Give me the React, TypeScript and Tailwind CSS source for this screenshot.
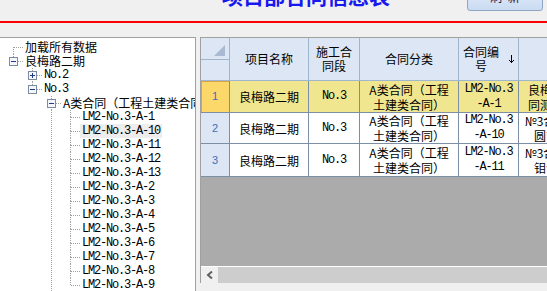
import React from "react";

type TRow = {
  level: number;
  text: string;
  kind: "leaf" | "minus" | "plus";
  first?: boolean;
  last: boolean;
  anc: number[];
  mono?: boolean;
  hl?: boolean;
};

const lm = ["1", "10", "11", "12", "13", "2", "3", "4", "5", "6", "7", "8", "9"];

const treeRows: TRow[] = [
  { level: 0, text: "加载所有数据", kind: "leaf", first: true, last: false, anc: [] },
  { level: 0, text: "良梅路二期", kind: "minus", last: true, anc: [] },
  { level: 1, text: "No.2", kind: "plus", last: false, anc: [], mono: true },
  { level: 1, text: "No.3", kind: "minus", last: true, anc: [], mono: true },
  { level: 2, text: "A类合同（工程土建类合同）", kind: "minus", last: false, anc: [] },
  ...lm.map((n, i) => ({
    level: 3,
    text: `LM2-No.3-A-${n}`,
    kind: "leaf" as const,
    last: i === lm.length - 1,
    anc: [2],
    mono: true,
    hl: n === "10",
  })),
];

const DOT = { stroke: "#a0a0a0", strokeDasharray: "1 1", strokeWidth: 1 };

function Connector({ r }: { r: TRow }) {
  const W = 23 + 19 * r.level;
  const cx = 13 + 19 * r.level;
  const c = cx + 0.5;
  const hasBox = r.kind !== "leaf";
  return (
    <svg width={W} height={14} className="shrink-0" shapeRendering="crispEdges">
      {r.anc.map((a) => (
        <line key={a} x1={13 + 19 * a + 0.5} y1={0} x2={13 + 19 * a + 0.5} y2={14} {...DOT} />
      ))}
      {!r.first && <line x1={c} y1={0} x2={c} y2={7} {...DOT} />}
      {!r.last && <line x1={c} y1={7} x2={c} y2={14} {...DOT} />}
      <line x1={hasBox ? cx + 5 : cx + 1} y1={7.5} x2={W} y2={7.5} {...DOT} />
      {hasBox && (
        <g>
          <rect x={cx - 4 + 0.5} y={3.5} width={8} height={8} fill="#f4f6fa" stroke="#7c8aa3" />
          <line x1={cx - 2} y1={7.5} x2={cx + 3} y2={7.5} stroke="#1e3c8c" />
          {r.kind === "plus" && <line x1={c} y1={5} x2={c} y2={10} stroke="#1e3c8c" />}
        </g>
      )}
    </svg>
  );
}

const CJK = "font-['Noto_Sans_CJK_SC',sans-serif]";
const MONO = "font-['Liberation_Mono',monospace] text-[12px] tracking-[-1.2px]";

type Cell = { lines: string[]; mono?: boolean };

const bodyRows: { n: string; h: string; sel?: boolean; cells: Cell[] }[] = [
  {
    n: "1",
    h: "h-[32px]",
    sel: true,
    cells: [
      { lines: ["良梅路二期"] },
      { lines: ["No.3"], mono: true },
      { lines: ["A类合同（工程", "土建类合同）"] },
      { lines: ["LM2-No.3", "-A-1"], mono: true },
      { lines: ["良梅路二期合同段", "同测试工程项目名"] },
    ],
  },
  {
    n: "2",
    h: "h-[31px]",
    cells: [
      { lines: ["良梅路二期"] },
      { lines: ["No.3"], mono: true },
      { lines: ["A类合同（工程", "土建类合同）"] },
      { lines: ["LM2-No.3", "-A-10"], mono: true },
      { lines: ["№3合同段道路工程", "圆管涵工程施工"] },
    ],
  },
  {
    n: "3",
    h: "h-[33px]",
    cells: [
      { lines: ["良梅路二期"] },
      { lines: ["No.3"], mono: true },
      { lines: ["A类合同（工程", "土建类合同）"] },
      { lines: ["LM2-No.3", "-A-11"], mono: true },
      { lines: ["№3合同段道路工程", "钼合金护栏工程"] },
    ],
  },
];

const colW = ["w-[79px]", "w-[51px]", "w-[99px]", "w-[60px]", "w-[114px]"];

export default function App() {
  return (
    <div className={`w-[547px] h-[291px] overflow-hidden bg-[#f0f0f0] ${CJK}`}>
      {/* top bar */}
      <div className="h-[21px] flex items-start overflow-hidden">
        <div className="pl-[222px] mt-[-16px] text-[21px] leading-[22px] font-bold text-[#1717f0] whitespace-nowrap">
          项目部合同信息表
        </div>
        <div className="ml-auto mr-[4px] mt-[-17px] h-[28px] w-[76px] shrink-0 rounded-[3px] border border-[#8fa6c4] bg-linear-to-b from-[#eaf1fb] to-[#c9dbf2] flex items-center justify-center text-[12px] text-[#1b2050]">
          刷&nbsp;&nbsp;新
        </div>
      </div>
      <div className="h-[2px] bg-[#ff0000]" />

      {/* main */}
      <div className="mt-[14px] flex items-start">
        {/* tree */}
        <div className="w-[196px] h-[260px] shrink-0 border-t border-r border-[#a0a0a0] bg-white overflow-hidden pt-[2px]">
          {treeRows.map((r, i) => (
            <div key={i} className="h-[14px] flex items-center whitespace-nowrap">
              <Connector r={r} />
              <span
                className={`px-[2px] leading-[14px] text-black ${r.mono ? MONO : "text-[12px]"} ${
                  r.hl ? "bg-[#ededed]" : ""
                }`}
              >
                {r.text}
              </span>
            </div>
          ))}
        </div>

        {/* grid */}
        <div className="ml-[4px] flex-1 min-w-0 h-[246px] border-l border-t border-[#a0a0a0] overflow-hidden flex flex-col">
          <div className="flex flex-col w-[450px]">
            {/* header */}
            <div className="h-[43px] flex bg-[#dce6f4] border-b border-[#9eb6ce] text-[12px] text-black leading-[14px]">
              <div className="w-[29px] shrink-0 border-r border-[#9eb6ce] flex flex-col">
                <div className="h-[22px] border-b border-[#9eb6ce] flex justify-end items-end pr-[4px] pb-[3px]">
                  <svg width="11" height="11">
                    <polygon points="11,0 11,11 0,11" fill="#a9b9d2" />
                  </svg>
                </div>
              </div>
              <div className={`${colW[0]} shrink-0 border-r border-[#9eb6ce] flex items-center justify-center`}>
                项目名称
              </div>
              <div className={`${colW[1]} shrink-0 border-r border-[#9eb6ce] flex items-center justify-center text-center`}>
                施工合
                <br />
                同段
              </div>
              <div className={`${colW[2]} shrink-0 border-r border-[#9eb6ce] flex items-center justify-center`}>
                合同分类
              </div>
              <div className={`${colW[3]} shrink-0 border-r border-[#9eb6ce] flex items-center`}>
                <div className="flex-1 text-center pr-[6px]">
                  合同编
                  <br />
                  号
                </div>
                <svg width="5" height="9" className="mr-[4px] shrink-0" shapeRendering="crispEdges">
                  <line x1="2.5" y1="0" x2="2.5" y2="8" stroke="#000" />
                  <rect x="0" y="5" width="1" height="1" fill="#000" />
                  <rect x="1" y="6" width="1" height="1" fill="#000" />
                  <rect x="3" y="6" width="1" height="1" fill="#000" />
                  <rect x="4" y="5" width="1" height="1" fill="#000" />
                </svg>
              </div>
              <div className={`${colW[4]} shrink-0 flex items-center justify-center`}>合同名称</div>
            </div>

            {/* body */}
            {bodyRows.map((row) => (
              <div
                key={row.n}
                className={`${row.h} flex border-b border-[#7d8fa6] ${row.sel ? "bg-[#f1e690]" : "bg-white"}`}
              >
                <div
                  className={`w-[29px] shrink-0 border-r border-[#7d8fa6] flex items-center justify-center font-['Liberation_Sans',sans-serif] text-[11px] text-[#3b6fb6] ${
                    row.sel ? "bg-[#fcd76a] shadow-[inset_1px_1px_0_#dba444]" : "bg-[#dce6f4]"
                  }`}
                >
                  {row.n}
                </div>
                {row.cells.map((c, ci) => (
                  <div
                    key={ci}
                    className={`${colW[ci]} shrink-0 ${ci < 4 ? "border-r border-[#7d8fa6]" : ""} flex flex-col items-center justify-center leading-[15px] whitespace-nowrap overflow-hidden text-black ${
                      c.mono ? MONO : "text-[12px]"
                    }`}
                  >
                    {c.lines.map((l, li) => (
                      <div key={li}>{l}</div>
                    ))}
                  </div>
                ))}
              </div>
            ))}
          </div>

          <div className="flex-1 bg-[#ababab]" />

          {/* scrollbar */}
          <div className="h-[17px] border-t border-white flex">
            <div className="w-[17px] shrink-0 bg-[#f0f0f0] flex items-center justify-center">
              <svg width="8" height="8">
                <polyline points="6,0.5 2,4 6,7.5" fill="none" stroke="#606060" strokeWidth="2" />
              </svg>
            </div>
            <div className="flex-1 bg-[#cdcdcd]" />
          </div>
        </div>
      </div>
    </div>
  );
}
